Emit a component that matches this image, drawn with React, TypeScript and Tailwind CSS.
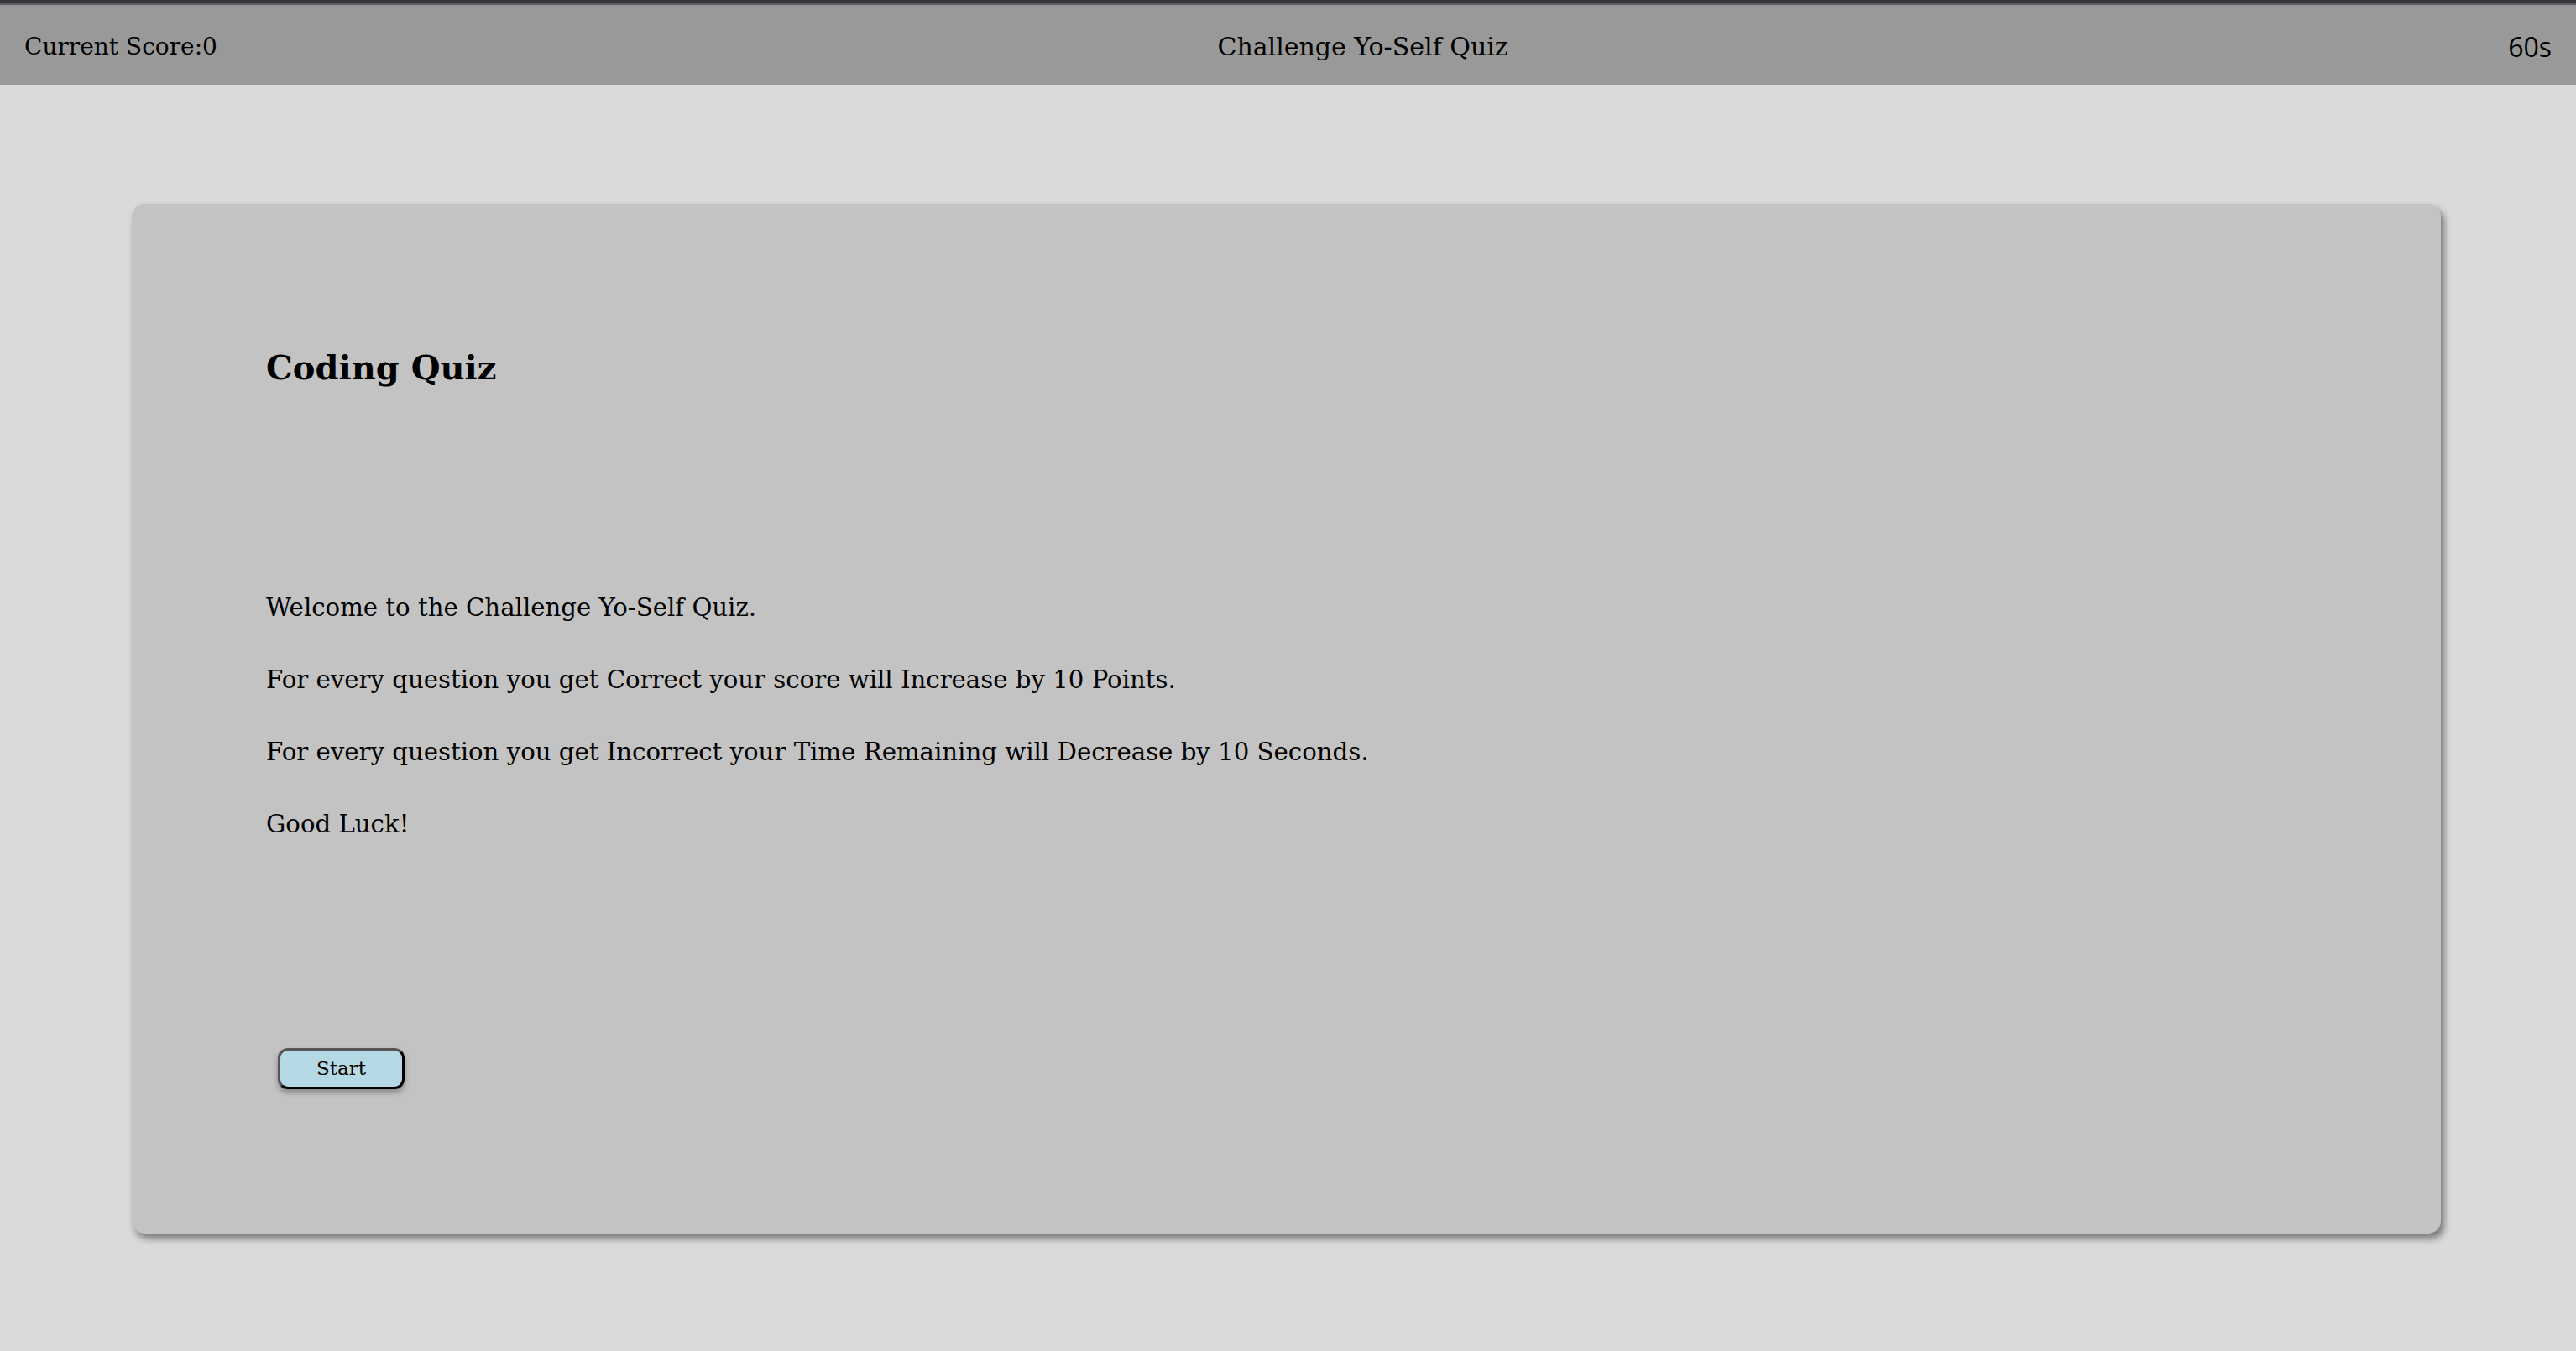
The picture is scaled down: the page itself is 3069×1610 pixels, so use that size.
export default function App() {
  const lines = [
    "Welcome to the Challenge Yo-Self Quiz.",
    "For every question you get Correct your score will Increase by 10 Points.",
    "For every question you get Incorrect your Time Remaining will Decrease by 10 Seconds.",
    "Good Luck!",
  ];

  return (
    <div className="min-h-screen bg-[#dbdada] font-['DejaVu_Serif',serif] text-black">
      <div className="h-[4px] bg-[#36373b]" />
      <div className="h-[2px] bg-[#5c5c60]" />
      <header className="flex h-[95px] items-center justify-between bg-[#999999] px-[29px] pt-[4px]">
        <span className="text-[28px]">Current Score:0</span>
        <span className="text-[30px]">Challenge Yo-Self Quiz</span>
        <span className="font-['Open_Sans',sans-serif] text-[32px]">60s</span>
      </header>

      <main className="ml-[157px] mr-[161px] mt-[142px]">
        <section className="rounded-[15px] bg-[#c4c3c3] pb-[172px] pl-[160px] pt-[167px] shadow-[4px_6px_8px_rgba(0,0,0,0.45)]">
          <h1 className="h-[56px] text-[40px] font-bold leading-[56px]">Coding Quiz</h1>

          <div className="mt-[234px] flex flex-col gap-[38px]">
            {lines.map((line) => (
              <p key={line} className="text-[29.2px] leading-[48px]">
                {line}
              </p>
            ))}
          </div>

          <button
            type="button"
            className="ml-[14px] mt-[243px] h-[49px] w-[151px] rounded-[12px] border-[3px] border-b-black border-l-[#555] border-r-black border-t-[#555] bg-[#b5d9e5] text-[23px] shadow-[0_4px_6px_rgba(0,0,0,0.3)]"
          >
            Start
          </button>
        </section>
      </main>
    </div>
  );
}
